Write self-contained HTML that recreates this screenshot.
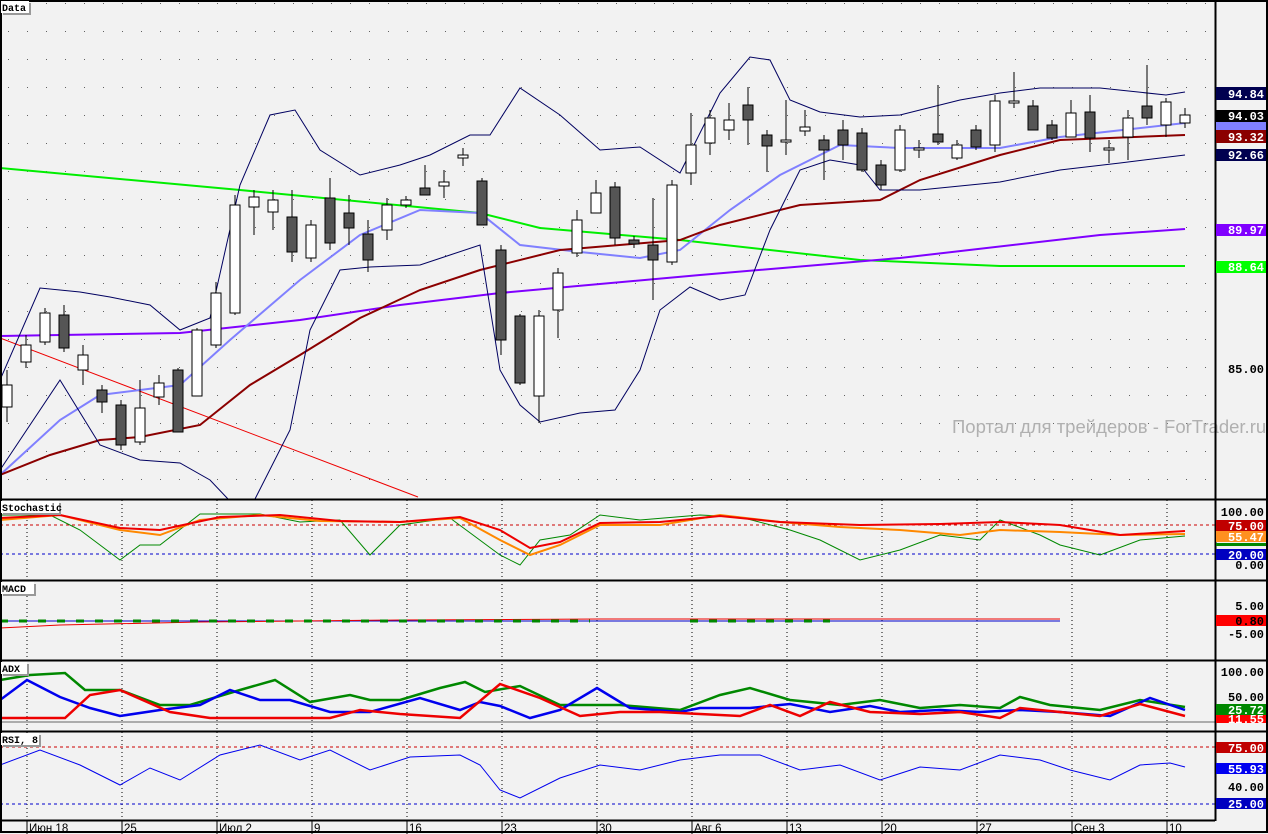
<!DOCTYPE html>
<html><head><meta charset="utf-8"><style>
body{margin:0;background:#f2f2f2;width:1268px;height:834px;overflow:hidden;font-family:"Liberation Sans",sans-serif}
svg{display:block}
.l{font-family:"Liberation Mono",monospace;font-weight:bold;font-size:12px}
.d{font-family:"Liberation Sans",sans-serif;font-size:11.5px}
</style></head><body>
<svg width="1268" height="834" xmlns="http://www.w3.org/2000/svg">
<defs>
<pattern id="dots" x="27" y="3" width="19" height="28" patternUnits="userSpaceOnUse"><rect x="0" y="0" width="1" height="1" fill="#000"/></pattern>
</defs>
<rect width="1268" height="834" fill="#f2f2f2"/>
<rect x="0" y="0" width="1215" height="499" fill="url(#dots)" opacity="0.6"/>
<g stroke="#000" stroke-dasharray="1,3">
<path d="M27 500V820M122 500V820M217 500V820M312 500V820M407 500V820M502 500V820M597 500V820M692 500V820M787 500V820M882 500V820M977 500V820M1072 500V820M1167 500V820"/>
</g>
<polyline fill="none" stroke="#e00" stroke-width="1" points="0,338 418,497"/>
<polyline fill="none" stroke="#00ee00" stroke-width="2" points="0,168 240,190 480,213 540,228 680,240 860,260 1000,266 1185,266"/>
<polyline fill="none" stroke="#8000ff" stroke-width="2" points="0,336 180,333 300,320 400,305 500,293 700,275 900,258 1100,235 1185,229"/>
<polyline fill="none" stroke="#8080ff" stroke-width="2" points="0,475 60,420 100,395 180,385 230,340 300,280 360,235 420,210 480,213 520,245 580,252 640,258 680,250 730,210 780,175 840,145 900,148 1000,148 1060,137 1185,123"/>
<polyline fill="none" stroke="#8b0000" stroke-width="2" points="0,475 50,455 100,440 140,437 200,425 250,385 300,355 360,318 420,290 480,270 560,250 680,240 720,225 800,205 880,200 920,180 1000,155 1060,140 1185,135"/>
<polyline fill="none" stroke="#000060" stroke-width="1" points="0,380 40,288 80,292 110,297 150,305 180,330 210,318 240,185 270,115 295,110 320,150 360,175 400,165 430,155 470,135 490,135 520,88 560,115 600,150 640,147 680,173 720,93 750,57 770,60 790,100 820,112 860,117 900,115 960,100 1000,93 1040,88 1100,88 1166,95 1185,92"/>
<polyline fill="none" stroke="#000060" stroke-width="1" points="0,470 60,380 100,445 140,460 180,463 210,480 228,499"/>
<polyline fill="none" stroke="#000060" stroke-width="1" points="255,499 290,430 310,330 340,270 370,267 420,265 450,255 480,245 500,370 520,405 540,422 580,413 615,410 640,370 660,310 690,287 720,300 745,295 770,230 800,170 830,160 860,165 880,190 920,190 1000,182 1060,170 1120,163 1185,155"/>
<g stroke="#000" stroke-width="1">
<path d="M7 370V422M26 335V368M45 308V345M64 305V352M83 345V385M102 385V413M121 400V450M140 380V445M159 375V405M178 368V432M197 328V396M216 282V348M235 195V315M254 190V235M273 190V230M292 190V262M311 220V262M330 178V250M349 195V245M368 220V272M387 198V240M406 196V208M425 165V195M444 170V198M463 148V166M482 178V225M501 245V355M520 314V385M539 310V423M558 268V338M577 210V257M596 180V213M615 182V245M634 236V248M653 198V300M672 180V265M691 113V185M710 110V155M729 103V140M748 87V145M767 130V172M786 100V155M805 110V136M824 135V180M843 120V160M862 128V172M881 160V190M900 125V172M919 140V158M938 85V145M957 140V160M976 125V150M995 95V152M1014 72V108M1033 100V130M1052 120V140M1071 100V137M1090 95V152M1109 140V163M1128 110V160M1147 65V125M1166 98V137M1185 108V128"/>
</g>
<g stroke="#000" stroke-width="1" fill="#fff">
<rect x="2" y="385" width="10" height="22"/><rect x="21" y="345" width="10" height="17"/><rect x="40" y="313" width="10" height="29"/>
<rect x="78" y="355" width="10" height="15"/><rect x="135" y="408" width="10" height="34"/><rect x="154" y="383" width="10" height="14"/>
<rect x="192" y="330" width="10" height="66"/><rect x="211" y="293" width="10" height="52"/><rect x="230" y="205" width="10" height="108"/>
<rect x="249" y="197" width="10" height="10"/><rect x="268" y="200" width="10" height="12"/><rect x="306" y="225" width="10" height="33"/>
<rect x="382" y="205" width="10" height="25"/><rect x="401" y="200" width="10" height="5"/><rect x="439" y="182" width="10" height="4"/>
<rect x="458" y="155" width="10" height="3"/>
<rect x="534" y="316" width="10" height="80"/><rect x="553" y="273" width="10" height="37"/><rect x="572" y="220" width="10" height="33"/>
<rect x="591" y="193" width="10" height="20"/><rect x="667" y="185" width="10" height="77"/><rect x="686" y="145" width="10" height="28"/>
<rect x="705" y="118" width="10" height="25"/><rect x="724" y="120" width="10" height="10"/><rect x="781" y="140" width="10" height="2"/>
<rect x="800" y="127" width="10" height="4"/><rect x="895" y="130" width="10" height="40"/><rect x="914" y="148" width="10" height="2"/>
<rect x="952" y="145" width="10" height="13"/><rect x="990" y="101" width="10" height="44"/><rect x="1009" y="101" width="10" height="2"/>
<rect x="1066" y="113" width="10" height="24"/><rect x="1104" y="148" width="10" height="2"/><rect x="1123" y="118" width="10" height="19"/>
<rect x="1161" y="102" width="10" height="23"/><rect x="1180" y="115" width="10" height="8"/>
</g>
<g stroke="#000" stroke-width="1" fill="#555">
<rect x="59" y="315" width="10" height="33"/><rect x="97" y="390" width="10" height="12"/><rect x="116" y="405" width="10" height="40"/>
<rect x="173" y="370" width="10" height="62"/><rect x="287" y="217" width="10" height="35"/><rect x="325" y="198" width="10" height="45"/>
<rect x="344" y="213" width="10" height="15"/><rect x="363" y="234" width="10" height="26"/><rect x="420" y="188" width="10" height="7"/>
<rect x="477" y="181" width="10" height="44"/><rect x="496" y="250" width="10" height="90"/><rect x="515" y="316" width="10" height="67"/>
<rect x="610" y="187" width="10" height="51"/><rect x="629" y="240" width="10" height="4"/><rect x="648" y="245" width="10" height="15"/>
<rect x="743" y="105" width="10" height="15"/><rect x="762" y="135" width="10" height="11"/><rect x="819" y="140" width="10" height="10"/>
<rect x="838" y="130" width="10" height="15"/><rect x="857" y="133" width="10" height="37"/><rect x="876" y="165" width="10" height="20"/>
<rect x="933" y="134" width="10" height="8"/><rect x="971" y="130" width="10" height="17"/><rect x="1028" y="106" width="10" height="24"/>
<rect x="1047" y="125" width="10" height="13"/><rect x="1085" y="112" width="10" height="26"/><rect x="1142" y="106" width="10" height="12"/>
</g>
<text x="952" y="433" font-size="18.5" fill="#b0b0b0" font-family="Liberation Sans,sans-serif">Портал для трейдеров - ForTrader.ru</text>

<path d="M0 525H1215" stroke="#c00" stroke-dasharray="3,3"/>
<path d="M0 554H1215" stroke="#00c" stroke-dasharray="3,3"/>
<polyline fill="none" stroke="#080" points="0,515 50,515 80,530 120,560 140,545 160,545 200,514 260,514 300,522 340,520 370,555 400,525 450,518 500,555 520,565 540,540 570,535 600,515 640,520 700,515 740,517 790,530 820,540 860,560 900,550 940,535 980,540 1000,520 1040,535 1060,545 1100,555 1140,540 1185,536"/>
<polyline fill="none" stroke="#f80" stroke-width="2" points="0,520 60,515 120,530 160,535 200,520 260,515 320,521 400,522 460,518 500,540 530,555 560,545 600,525 660,525 720,515 780,522 840,527 900,530 960,535 1000,530 1060,532 1120,535 1185,534"/>
<polyline fill="none" stroke="#e00" stroke-width="2" points="0,518 60,515 120,528 160,530 220,517 280,515 340,521 400,522 460,517 500,530 530,548 560,542 600,523 660,522 720,516 780,522 860,525 940,524 1000,522 1060,525 1120,535 1185,531"/>
<path d="M0 621H1060" stroke="#00c" stroke-width="1"/>
<polyline fill="none" stroke="#e00" points="0,628 60,625 200,622 400,620 600,619 1060,619"/>
<path d="M0 621H590M690 621H830" stroke="#080" stroke-width="3" stroke-dasharray="8,11"/>
<path d="M0 722H1215" stroke="#666"/>
<polyline fill="none" stroke="#080" stroke-width="2.5" points="0,680 30,675 65,673 85,690 120,690 160,705 190,705 240,690 275,680 310,702 350,695 370,700 400,700 440,688 465,682 485,692 520,686 560,705 620,705 680,710 720,695 750,688 790,700 840,705 880,700 920,708 960,705 1000,708 1020,697 1050,705 1100,710 1140,700 1185,707"/>
<polyline fill="none" stroke="#00e" stroke-width="2.5" points="0,700 27,680 60,697 90,708 120,716 160,710 200,705 230,690 260,700 290,700 330,712 370,712 420,698 460,710 480,702 500,706 530,718 560,710 597,688 630,708 680,712 700,708 750,708 790,704 830,712 870,706 900,712 940,710 980,712 1020,710 1060,712 1110,716 1150,698 1185,710"/>
<polyline fill="none" stroke="#e00" stroke-width="2.5" points="0,718 65,718 90,695 120,690 170,712 210,718 330,718 360,710 400,714 460,718 500,684 540,698 580,716 620,712 660,712 700,714 740,716 770,705 800,716 830,702 870,712 920,714 960,712 1000,718 1020,708 1060,712 1100,716 1140,704 1185,716"/>
<path d="M0 747H1215" stroke="#c00" stroke-dasharray="3,3"/>
<path d="M0 804H1215" stroke="#00c" stroke-dasharray="3,3"/>
<polyline fill="none" stroke="#00e" points="0,765 40,750 80,765 120,785 150,768 180,780 220,755 260,745 300,760 330,750 370,770 410,757 460,755 480,765 500,790 520,798 560,778 600,765 640,770 680,760 720,755 760,755 800,770 840,765 880,780 920,767 960,770 1000,755 1040,760 1070,770 1110,780 1140,765 1170,763 1185,767"/>

<g stroke="#000" stroke-width="2" fill="none">
<rect x="1" y="1" width="1266" height="831"/>
<path d="M0 499.5H1268M0 580.5H1268M0 660.5H1268M0 731.5H1268M0 820.5H1215"/>
<path d="M1215.5 0V821"/>
</g>
<g font-family="Liberation Mono,monospace" font-weight="bold" font-size="10">
<rect x="3" y="3" width="28" height="12" fill="#999"/><rect x="1" y="1" width="28" height="12" fill="#fff"/><text x="2" y="11">Data</text>
<rect x="3" y="503" width="58" height="12" fill="#999"/><rect x="1" y="501" width="58" height="12" fill="#fff"/><text x="2" y="511">Stochastic</text>
<rect x="3" y="584" width="33" height="12" fill="#999"/><rect x="1" y="582" width="33" height="12" fill="#fff"/><text x="2" y="592">MACD</text>
<rect x="3" y="664" width="26" height="12" fill="#999"/><rect x="1" y="662" width="26" height="12" fill="#fff"/><text x="2" y="672">ADX</text>
<rect x="3" y="735" width="38" height="12" fill="#999"/><rect x="1" y="733" width="38" height="12" fill="#fff"/><text x="2" y="743">RSI, 8</text>
</g>
<g class="l" text-anchor="end">
<text x="1264" y="373">85.00</text>
<rect x="1216" y="87" width="50" height="13" fill="#000050"/><text x="1264" y="98" fill="#fff">94.84</text>
<rect x="1216" y="110" width="50" height="12" fill="#000"/><text x="1264" y="120" fill="#fff">94.03</text>
<rect x="1216" y="122" width="50" height="8" fill="#8080ff"/>
<rect x="1216" y="130" width="50" height="13" fill="#8b0000"/><text x="1264" y="141" fill="#fff">93.32</text>
<rect x="1216" y="149" width="50" height="12" fill="#000050"/><text x="1264" y="159" fill="#fff">92.66</text>
<rect x="1216" y="224" width="50" height="12" fill="#8000ff"/><text x="1264" y="234" fill="#fff">89.97</text>
<rect x="1216" y="261" width="50" height="12" fill="#00ff00"/><text x="1264" y="271" fill="#fff">88.64</text>
<text x="1264" y="516">100.00</text>
<rect x="1216" y="520" width="50" height="11" fill="#c00000"/><text x="1264" y="530" fill="#fff">75.00</text>
<rect x="1216" y="531" width="50" height="11" fill="#ff9020"/><text x="1264" y="541" fill="#fff">55.47</text>
<rect x="1216" y="543" width="50" height="3" fill="#080"/>
<rect x="1216" y="549" width="50" height="11" fill="#0000c0"/><text x="1264" y="559" fill="#fff">20.00</text>
<text x="1264" y="569">0.00</text>
<text x="1264" y="610">5.00</text>
<rect x="1216" y="615" width="50" height="11" fill="#f00"/><text x="1264" y="625" fill="#000">0.80</text>
<text x="1264" y="638">-5.00</text>
<text x="1264" y="676">100.00</text>
<text x="1264" y="701">50.00</text>
<rect x="1216" y="704" width="50" height="11" fill="#080"/><text x="1264" y="714" fill="#fff">25.72</text>
<rect x="1216" y="715" width="50" height="8" fill="#f00"/><text x="1264" y="723" fill="#fff">11.55</text>
<rect x="1216" y="742" width="50" height="11" fill="#c00000"/><text x="1264" y="752" fill="#fff">75.00</text>
<rect x="1216" y="763" width="50" height="11" fill="#0000f0"/><text x="1264" y="773" fill="#fff">55.93</text>
<text x="1264" y="791">40.00</text>
<rect x="1216" y="798" width="50" height="11" fill="#0000c0"/><text x="1264" y="808" fill="#fff">25.00</text>
</g>
<g stroke="#000"><path d="M27 821V834M122 821V834M217 821V834M312 821V834M407 821V834M502 821V834M597 821V834M692 821V834M787 821V834M882 821V834M977 821V834M1072 821V834M1167 821V834"/></g>
<g class="d">
<text x="29" y="832">Июн 18</text><text x="124" y="832">25</text><text x="219" y="832">Июл 2</text><text x="314" y="832">9</text>
<text x="409" y="832">16</text><text x="504" y="832">23</text><text x="599" y="832">30</text><text x="694" y="832">Авг 6</text>
<text x="789" y="832">13</text><text x="884" y="832">20</text><text x="979" y="832">27</text><text x="1074" y="832">Сен 3</text><text x="1169" y="832">10</text>
</g>
</svg>
</body></html>
